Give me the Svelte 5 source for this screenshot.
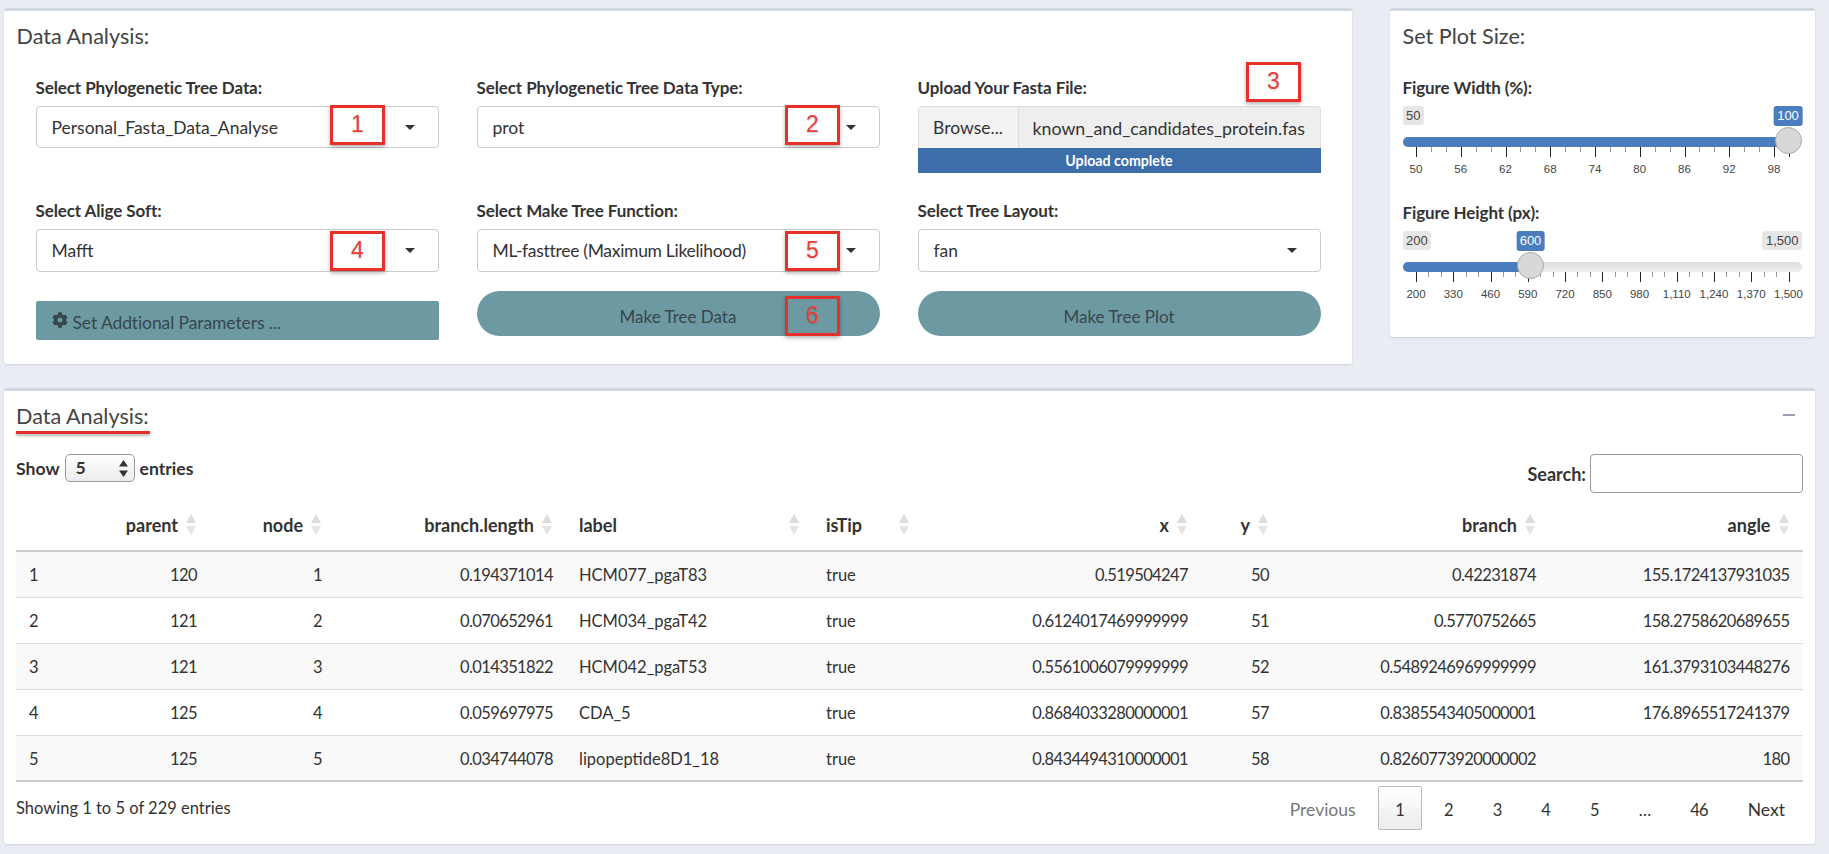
<script>
  const rows = [
    [1, 120, 1, '0.194371014', 'HCM077_pgaT83', 'true', '0.519504247', 50, '0.42231874', '155.1724137931035'],
    [2, 121, 2, '0.070652961', 'HCM034_pgaT42', 'true', '0.6124017469999999', 51, '0.5770752665', '158.2758620689655'],
    [3, 121, 3, '0.014351822', 'HCM042_pgaT53', 'true', '0.5561006079999999', 52, '0.5489246969999999', '161.3793103448276'],
    [4, 125, 4, '0.059697975', 'CDA_5', 'true', '0.8684033280000001', 57, '0.8385543405000001', '176.8965517241379'],
    [5, 125, 5, '0.034744078', 'lipopeptide8D1_18', 'true', '0.8434494310000001', 58, '0.8260773920000002', '180']
  ];
  const colWidths = [60, 134, 125, 231, 247, 110, 278, 81, 267, 253.5];
  const heads = [
    ['', false, false], ['parent', true, true], ['node', true, true], ['branch.length', true, true],
    ['label', false, true], ['isTip', false, true], ['x', true, true], ['y', true, true],
    ['branch', true, true], ['angle', true, true]
  ];
  const pages = ['1', '2', '3', '4', '5', '…', '46'];

  const origin = 13.5;
  const span = 372.5;

  const ticks = (count) => {
    const out = [];
    const n = (count - 1);
    for (let i = 0; i <= n * 3; i++) out.push({ x: origin + (i / (n * 3)) * span, major: i % 3 === 0 });
    return out;
  };

  const widthScale = 44.75;
  const widthTicks = [];
  for (let i = 0; i <= 25; i++) {
    const v = 50 + i * 2;
    widthTicks.push({ x: origin + (v - 50) * (widthScale / 6), major: i % 3 === 0 || v === 100 });
  }
  const widthLabels = [50, 56, 62, 68, 74, 80, 86, 92, 98].map((v) => ({ t: String(v), x: origin + (v - 50) * (widthScale / 6) }));
  const heightTicks = ticks(11);
  const heightLabels = ['200', '330', '460', '590', '720', '850', '980', '1,110', '1,240', '1,370', '1,500'].map((t, i) => ({ t, x: origin + i * (span / 10) }));

  const sliders = [
    { title: 'Figure Width (%):', min: '50', max: null, value: '100', valueX: 385.5, handle: 386, fill: 386, tickset: widthTicks, labels: widthLabels, cls: 's1' },
    { title: 'Figure Height (px):', min: '200', max: '1,500', value: '600', valueX: 128, handle: 128, fill: 128, tickset: heightTicks, labels: heightLabels, cls: 's2' }
  ];
</script>

{#snippet caret()}
  <span class="caret"></span>
{/snippet}

<div class="page">
  <div class="top">
    <section class="card main">
      <h3 class="title">Data Analysis:</h3>
      <div class="grid">
        <div class="field rowa">
          <div class="lab">Select Phylogenetic Tree Data:</div>
          <div class="sel"><span>Personal_Fasta_Data_Analyse</span>{@render caret()}</div>
        </div>
        <div class="field rowa">
          <div class="lab">Select Phylogenetic Tree Data Type:</div>
          <div class="sel"><span>prot</span>{@render caret()}</div>
        </div>
        <div class="field rowa">
          <div class="lab">Upload Your Fasta File:</div>
          <div class="file">
            <div class="browse">Browse...</div>
            <div class="fname">known_and_candidates_protein.fas</div>
          </div>
          <div class="progress">Upload complete</div>
        </div>

        <div class="field rowb">
          <div class="lab">Select Alige Soft:</div>
          <div class="sel tall"><span>Mafft</span>{@render caret()}</div>
        </div>
        <div class="field rowb">
          <div class="lab">Select Make Tree Function:</div>
          <div class="sel tall"><span class="tighter">ML-fasttree (Maximum Likelihood)</span>{@render caret()}</div>
        </div>
        <div class="field rowb">
          <div class="lab">Select Tree Layout:</div>
          <div class="sel tall"><span>fan</span>{@render caret()}</div>
        </div>

        <div class="squarebtn">
          <svg class="cog" viewBox="0 0 512 512" aria-hidden="true"><path d="M487.4 315.7l-42.6-24.6c4.3-23.2 4.3-47 0-70.2l42.6-24.6c4.9-2.8 7.1-8.6 5.5-14-11.1-35.6-30-67.8-54.7-94.6-3.8-4.1-10-5.1-14.8-2.3L380.8 110c-17.9-15.4-38.5-27.3-60.8-35.1V25.8c0-5.6-3.9-10.5-9.4-11.7-36.7-8.2-74.3-7.8-109.2 0-5.5 1.2-9.4 6.1-9.4 11.7V75c-22.2 7.9-42.8 19.8-60.8 35.1L88.7 85.5c-4.9-2.8-11-1.9-14.8 2.3-24.7 26.7-43.6 58.9-54.7 94.6-1.7 5.4.6 11.2 5.5 14L67.3 221c-4.3 23.2-4.3 47 0 70.2l-42.6 24.6c-4.9 2.8-7.1 8.6-5.5 14 11.1 35.6 30 67.8 54.7 94.6 3.8 4.1 10 5.1 14.8 2.3l42.6-24.6c17.9 15.4 38.5 27.3 60.8 35.1v49.2c0 5.6 3.9 10.5 9.4 11.7 36.7 8.2 74.3 7.8 109.2 0 5.5-1.2 9.4-6.1 9.4-11.7v-49.2c22.2-7.9 42.8-19.8 60.8-35.1l42.6 24.6c4.9 2.8 11 1.9 14.8-2.3 24.7-26.7 43.6-58.9 54.7-94.6 1.5-5.5-.7-11.3-5.6-14.1zM256 336c-44.1 0-80-35.9-80-80s35.9-80 80-80 80 35.9 80 80-35.9 80-80 80z"/></svg>
          <span>Set Addtional Parameters ...</span>
        </div>
        <div class="pill">Make Tree Data</div>
        <div class="pill">Make Tree Plot</div>
      </div>

      <div class="mark m1">1</div>
      <div class="mark m2">2</div>
      <div class="mark m3">3</div>
      <div class="mark m4">4</div>
      <div class="mark m5">5</div>
      <div class="mark m6">6</div>
    </section>

    <section class="card side">
      <h3 class="title">Set Plot Size:</h3>
      {#each sliders as s}
        <div class="slider {s.cls}">
          <div class="lab">{s.title}</div>
          <div class="range">
            <span class="chip" style="left:0">{s.min}</span>
            {#if s.max}<span class="chip" style="right:0">{s.max}</span>{/if}
            <span class="chip active" style="left:{s.valueX}px">{s.value}</span>
            <div class="track"><div class="fill" style="width:{s.fill}px"></div></div>
            {#each s.tickset as t}
              <i class="tick" class:major={t.major} style="left:{t.x}px"></i>
            {/each}
            {#each s.labels as l}
              <span class="ticklabel" style="left:{l.x}px">{l.t}</span>
            {/each}
            <div class="handle" style="left:{s.handle}px"></div>
          </div>
        </div>
      {/each}
    </section>
  </div>

  <section class="card tablecard">
    <h3 class="title">Data Analysis:</h3>
    <div class="underline"></div>
    <div class="minus"></div>
    <div class="toolbar">
      <div class="show">
        <span>Show</span>
        <div class="lenbox">
          <span>5</span>
          <svg viewBox="0 0 9 17" class="spin" aria-hidden="true"><path d="M4.5 0L9 6.5H0zM4.5 17L0 10.5H9z"/></svg>
        </div>
        <span>entries</span>
      </div>
      <div class="search">
        <span>Search:</span>
        <div class="searchbox"></div>
      </div>
    </div>
    <table>
      <colgroup>
        {#each colWidths as w}<col style="width:{w}px" />{/each}
      </colgroup>
      <thead>
        <tr>
          {#each heads as h}
            <th class:num={h[1]}>
              {h[0]}
              {#if h[2]}<span class="sort up"></span><span class="sort down"></span>{/if}
            </th>
          {/each}
        </tr>
      </thead>
      <tbody>
        {#each rows as r}
          <tr>
            {#each r as c, i}
              <td class:num={heads[i][1]} class:words={i === 4 || i === 5}>{c}</td>
            {/each}
          </tr>
        {/each}
      </tbody>
    </table>
    <div class="foot">
      <div class="info">Showing 1 to 5 of 229 entries</div>
      <div class="pager">
        <span class="pg word">Previous</span>
        {#each pages as p, i}
          <span class="pg" class:cur={i === 0}>{p}</span>
        {/each}
        <span class="pg word next">Next</span>
      </div>
    </div>
  </section>
</div>

<style>
  :global(body) {
    margin: 0;
    background: #e9ecf2;
  }
  .page {
    box-sizing: border-box;
    width: 1829px;
    height: 854px;
    padding: 8px 14px 0 4px;
    font-family: Lato, "Noto Sans", sans-serif;
    font-size: 17.5px;
    color: #333;
    overflow: hidden;
  }
  .top {
    display: flex;
    align-items: flex-start;
    gap: 38px;
  }
  .card {
    position: relative;
    box-sizing: border-box;
    background: #fff;
    border-top: 3px solid #d2d6de;
    border-radius: 3px;
    box-shadow: 0 1px 2px rgba(0, 0, 0, 0.12);
  }
  .main {
    width: 1348px;
    height: 356px;
  }
  .side {
    width: 425px;
    height: 329px;
  }
  .title {
    margin: 0;
    height: 51px;
    padding-left: 12.5px;
    font-size: 21.6px;
    font-weight: 400;
    line-height: 51px;
    color: #444;
  }
  .grid {
    display: grid;
    grid-template-columns: repeat(3, 403px);
    grid-template-rows: 123px 91px auto;
    column-gap: 38px;
    margin-top: 15px;
    padding-left: 31.5px;
  }
  .lab {
    height: 22px;
    margin-bottom: 7px;
    font-size: 17px;
    letter-spacing: -0.1px;
    line-height: 22px;
    font-weight: 700;
  }
  .sel {
    box-sizing: border-box;
    display: flex;
    align-items: center;
    justify-content: space-between;
    height: 42px;
    padding: 0 23px 0 15px;
    border: 1px solid #ccc;
    border-radius: 4px;
    background: #fff;
  }
  .sel.tall {
    height: 43px;
  }
  .tighter {
    letter-spacing: -0.3px;
  }
  .caret {
    width: 0;
    height: 0;
    border-left: 5.5px solid transparent;
    border-right: 5.5px solid transparent;
    border-top: 5px solid #333;
  }
  .file {
    box-sizing: border-box;
    display: flex;
    height: 42px;
    border: 1px solid #ddd;
    border-bottom: 0;
    background: #eee;
    border-radius: 4px 4px 0 0;
    line-height: 42px;
  }
  .browse {
    box-sizing: border-box;
    width: 100px;
    text-align: center;
    background: #f2f2f2;
    border-right: 1px solid #ddd;
  }
  .fname {
    flex: 1;
    padding-left: 14px;
    font-size: 17.8px;
    white-space: nowrap;
  }
  .progress {
    height: 25px;
    line-height: 25px;
    text-align: center;
    background: #3c6eaa;
    color: #fff;
    font-size: 14.2px;
    font-weight: 700;
  }
  .squarebtn {
    box-sizing: border-box;
    display: flex;
    align-items: center;
    gap: 5px;
    height: 39px;
    margin-top: 10px;
    padding: 3px 0 0 16px;
    background: #6d9aa2;
    border-radius: 2px;
    color: #37474d;
    letter-spacing: -0.1px;
  }
  .cog {
    width: 16px;
    height: 16px;
    margin-top: -5px;
    fill: #37474d;
  }
  .pill {
    box-sizing: border-box;
    height: 45px;
    padding-top: 7px;
    font-size: 17px;
    line-height: 38px;
    text-align: center;
    background: #6d9aa2;
    border-radius: 23px;
    color: #37474d;
  }
  .mark {
    position: absolute;
    box-sizing: border-box;
    width: 55px;
    height: 40px;
    border: 3px solid #e7302a;
    box-shadow: 0 2px 4px rgba(0, 0, 0, 0.3);
    color: #e8403a;
    font-family: "Liberation Sans", sans-serif;
    font-size: 23px;
    line-height: 33px;
    text-align: center;
    text-shadow: 0 1px 2px rgba(0, 0, 0, 0.2);
  }
  .m1 { left: 326px; top: 94px; }
  .m2 { left: 781px; top: 94px; }
  .m3 { left: 1242px; top: 51px; }
  .m4 { left: 326px; top: 220px; }
  .m5 { left: 781px; top: 220px; }
  .m6 { left: 781px; top: 285px; }

  .slider {
    padding-left: 12.5px;
  }
  .side .title + .slider {
    margin-top: 15px;
  }
  .s2 {
    margin-top: 3px;
  }
  .range {
    position: relative;
    width: 399.5px;
    height: 93px;
  }
  .chip {
    position: absolute;
    top: 0;
    padding: 0 3.5px;
    height: 19px;
    line-height: 19px;
    font-family: "Liberation Sans", sans-serif;
    font-size: 13px;
    background: #e6e6e6;
    color: #444;
    border-radius: 3px;
  }
  .chip.active {
    height: 20px;
    transform: translateX(-50%);
    background: #4a7dbe;
    color: #fff;
  }
  .track {
    position: absolute;
    left: 0;
    right: 0;
    top: 31px;
    height: 10px;
    border-radius: 5px;
    background: linear-gradient(#dedede, #f0f0f0);
    overflow: hidden;
  }
  .fill {
    height: 100%;
    background: #4a7dbe;
  }
  .tick {
    position: absolute;
    top: 41px;
    width: 1px;
    height: 5px;
    background: #999;
  }
  .tick.major {
    height: 10px;
    background: #222;
  }
  .ticklabel {
    position: absolute;
    top: 56px;
    transform: translateX(-50%);
    font-family: "Liberation Sans", sans-serif;
    font-size: 11.5px;
    line-height: 14px;
    color: #444;
    white-space: nowrap;
  }
  .handle {
    position: absolute;
    top: 21px;
    box-sizing: border-box;
    width: 27px;
    height: 27px;
    margin-left: -13.5px;
    border-radius: 50%;
    background: #d8d8d8;
    border: 1px solid #aaa;
  }

  .tablecard {
    width: 1811px;
    height: 456px;
    margin-top: 24px;
    padding: 0 12.5px 0 12px;
  }
  .tablecard .title {
    padding-left: 0;
  }
  .underline {
    position: absolute;
    left: 12px;
    top: 40px;
    width: 134px;
    height: 3px;
    background: #e52e2a;
    box-shadow: 0 2px 3px rgba(0, 0, 0, 0.3);
  }
  .minus {
    position: absolute;
    left: 1779px;
    top: 23px;
    width: 12px;
    height: 2px;
    background: #97a0b3;
  }
  .toolbar {
    display: flex;
    justify-content: space-between;
    align-items: flex-start;
    height: 39px;
    margin-top: 12px;
    font-size: 17.6px;
  }
  .show {
    display: flex;
    align-items: center;
    gap: 5px;
    height: 28px;
    font-weight: 700;
  }
  .lenbox {
    box-sizing: border-box;
    position: relative;
    width: 70px;
    height: 28px;
    padding-left: 10px;
    line-height: 26px;
    border: 1px solid #999;
    border-radius: 5px;
    background: linear-gradient(#fff, #ececec);
  }
  .spin {
    position: absolute;
    right: 6px;
    top: 5px;
    width: 9px;
    height: 17px;
    fill: #333;
  }
  .search {
    display: flex;
    align-items: center;
    gap: 4px;
    font-size: 18px;
    font-weight: 700;
  }
  .searchbox {
    box-sizing: border-box;
    width: 212.5px;
    height: 39px;
    background: #fff;
    border: 1px solid #999;
    border-radius: 4px;
  }
  table {
    width: 1786.5px;
    table-layout: fixed;
    border-collapse: collapse;
  }
  th {
    position: relative;
    box-sizing: border-box;
    height: 58px;
    padding: 7px 32px 0 13px;
    text-align: left;
    font-size: 18px;
    font-weight: 700;
    border-bottom: 2px solid #ccc;
  }
  td {
    box-sizing: border-box;
    height: 46px;
    padding: 2px 13px 0;
    font-size: 16.5px;
    letter-spacing: -0.6px;
    border-bottom: 1px solid #ddd;
  }
  td.words {
    letter-spacing: 0;
  }
  tbody tr:nth-child(odd) td {
    background: #f9f9f9;
  }
  tbody tr:last-child td {
    border-bottom: 2px solid #ccc;
  }
  .num {
    text-align: right;
  }
  .sort {
    position: absolute;
    right: 14px;
    width: 0;
    height: 0;
    border-left: 5px solid transparent;
    border-right: 5px solid transparent;
  }
  .sort.up {
    top: 21px;
    border-bottom: 9px solid #dcdcdc;
  }
  .sort.down {
    top: 33px;
    border-top: 9px solid #e4e4e4;
  }
  .foot {
    display: flex;
    justify-content: space-between;
    align-items: flex-start;
    margin-top: 4px;
  }
  .info {
    padding-top: 10px;
    font-size: 16.5px;
    line-height: 24px;
  }
  .pager {
    display: flex;
    gap: 4.7px;
  }
  .pg {
    box-sizing: border-box;
    height: 44px;
    padding: 0 16.5px;
    font-size: 16.5px;
    letter-spacing: -0.6px;
    line-height: 46px;
    border: 1px solid transparent;
    border-radius: 2px;
    white-space: nowrap;
  }
  .pg.word {
    font-size: 17.5px;
    letter-spacing: 0;
    color: #777;
  }
  .pg.next {
    color: #333;
  }
  .pg.cur {
    border-color: #bbb;
    background: linear-gradient(#fff, #ececec);
  }
</style>
